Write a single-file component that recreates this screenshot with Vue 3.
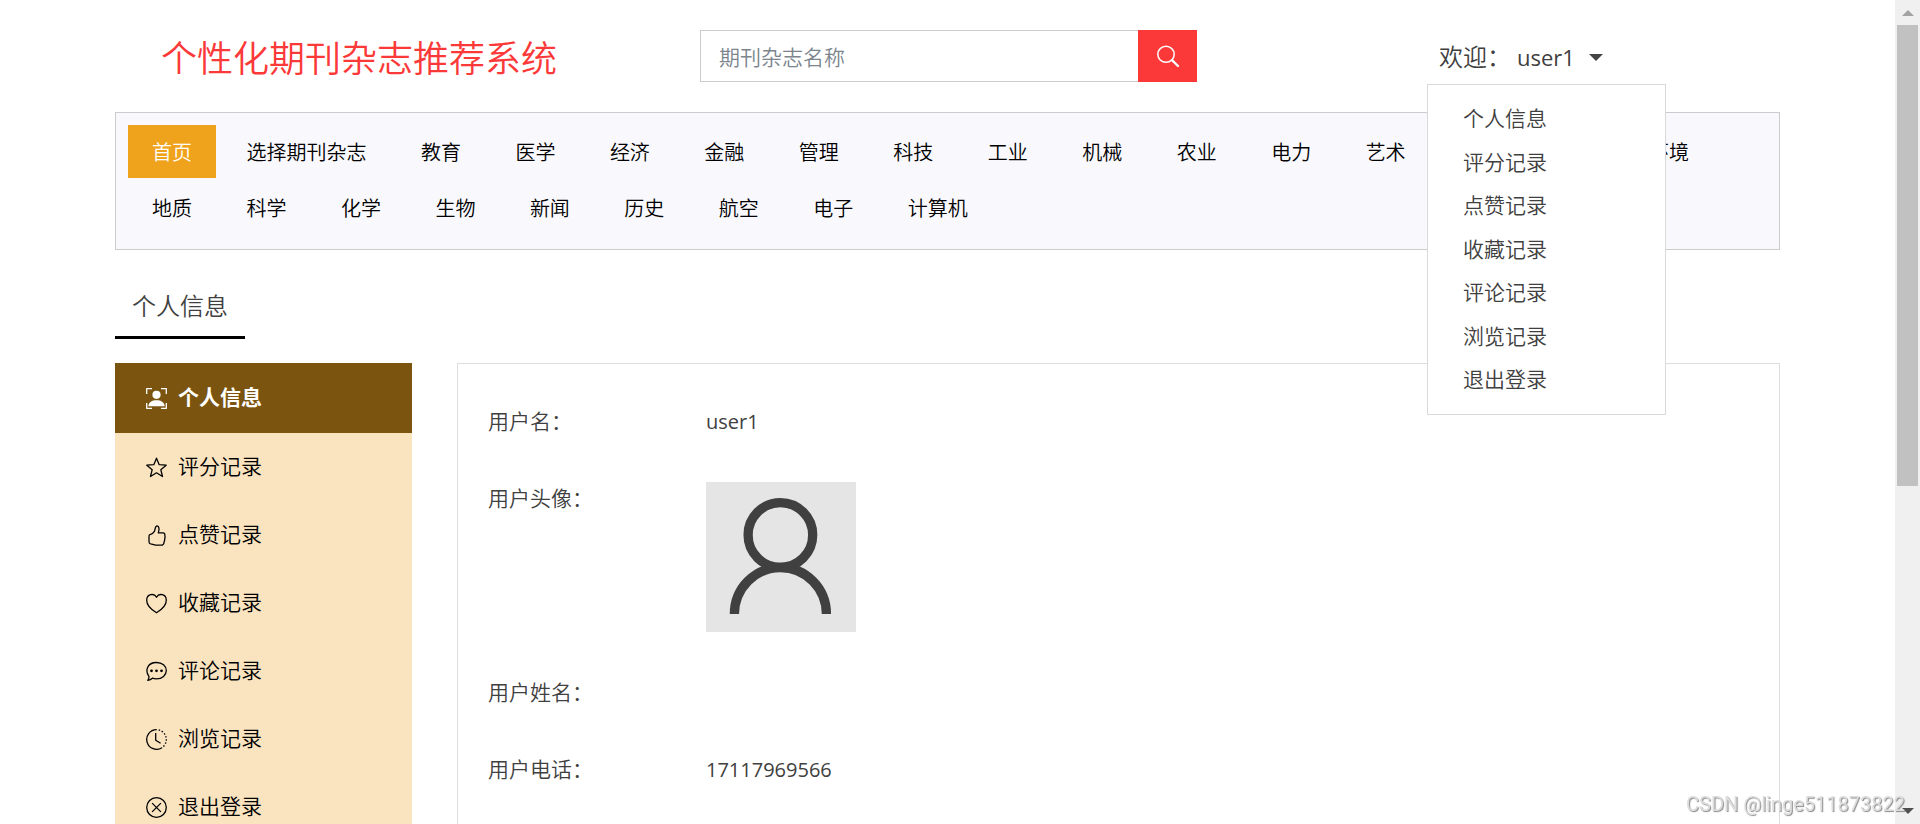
<script setup>
import { ref } from 'vue'

const keyword = ref('')
const menuOpen = ref(true)

const categories = [
  '首页', '选择期刊杂志', '教育', '医学', '经济', '金融', '管理', '科技', '工业',
  '机械', '农业', '电力', '艺术', '文学', '法律', '环境', '地质', '科学', '化学',
  '生物', '新闻', '历史', '航空', '电子', '计算机'
]

const records = [
  { name: '个人信息', icon: 'person' },
  { name: '评分记录', icon: 'star' },
  { name: '点赞记录', icon: 'thumb' },
  { name: '收藏记录', icon: 'heart' },
  { name: '评论记录', icon: 'chat' },
  { name: '浏览记录', icon: 'clock' },
  { name: '退出登录', icon: 'exit' }
]
</script>

<template>
  <div class="page">
    <header class="top">
      <h1 class="brand">个性化期刊杂志推荐系统</h1>
      <form class="search" role="search" @submit.prevent>
        <input v-model="keyword" class="search-input" type="text" placeholder="期刊杂志名称" aria-label="期刊杂志名称">
        <button class="search-button" type="submit" aria-label="搜索">
          <svg width="24" height="24" viewBox="0 0 24 24" fill="none" stroke="#fff">
            <ellipse cx="10" cy="10.3" rx="8.2" ry="8" stroke-width="1.5" />
            <path d="M16 16.2 L22 22" stroke-width="2.4" stroke-linecap="round" />
          </svg>
        </button>
      </form>
      <div class="account">
        <button class="account-toggle" type="button" :aria-expanded="menuOpen" @click="menuOpen = !menuOpen">
          <span class="welcome">欢迎：</span>
          <span class="user">user1</span>
          <span class="caret"></span>
        </button>
        <ul v-if="menuOpen" class="menu">
          <li v-for="r in records" :key="r.name"><a href="#">{{ r.name }}</a></li>
        </ul>
      </div>
    </header>

    <nav class="categories">
      <template v-for="(c, i) in categories" :key="c">
        <a href="#" :class="['category', { active: i === 0 }]">{{ c }}</a>{{ ' ' }}
      </template>
    </nav>

    <h2 class="section-title">个人信息</h2>

    <main class="content">
      <aside class="sidebar">
        <a v-for="(r, i) in records" :key="r.name" href="#" :class="['side-link', { active: i === 0 }]">
          <svg class="side-icon" width="21" height="21" viewBox="0 0 21 21" fill="none" stroke="currentColor" stroke-width="1.3" stroke-linejoin="round">
            <g v-if="r.icon === 'person'">
              <path d="M.7 6V.7H6M15 .7h5.3V6M20.3 15v5.3H15M6 20.3H.7V15" />
              <circle cx="10.5" cy="6.8" r="4.1" fill="currentColor" stroke="none" />
              <path d="M2.300 18.300c.5-4.200 3.700-6 8.200-6s7.700 1.800 8.200 6z" fill="currentColor" stroke="none" />
            </g>
            <path v-else-if="r.icon === 'star'" d="M10.500 1.200l2.700 6.500 7 .5-5.400 4.500 1.700 6.800-6-3.700-6 3.700 1.700-6.800L.8 8.200l7-.5z" />
            <path v-else-if="r.icon === 'thumb'" d="M3.500 9.800c2.400-.3 3.900-1.700 4.900-3.400C9.300 4.700 9 .9 11 .9c2.400.2 2.400 3.400 1.300 7h4.800c1.500.1 2.100 1.400 1.700 2.600.5 1.200.3 2.400-.1 3.200.1 1.200-.1 2.300-.6 3 0 2.500-1.200 3.500-3.300 3.500h-3.500c-2.300 0-4.100-1-6.800-1.400-1.300-.3-1.500-1.200-1.500-2.300V12c0-1.200.1-1.900.5-2.200z" />
            <path v-else-if="r.icon === 'heart'" d="M10.500 19.800C5.500 16.700.7 12.600.7 7.200c0-6 7.200-7.600 9.800-3 2.600-4.600 9.800-3 9.800 3 0 5.400-4.800 9.500-9.800 12.600z" />
            <g v-else-if="r.icon === 'chat'">
              <path d="M2.900 15.300C-1 10 .8 1.600 10.500 1.500c5.800 0 9.800 3.600 9.800 8.100s-4 8.300-9.800 8.300c-1.600 0-2.900-.2-4.100-.7-1.300 1.400-2.900 2-4.600 2.200.8-1.200 1.300-2.600 1.100-4.100z" />
              <g fill="currentColor" stroke="none">
                <circle cx="5.500" cy="9.800" r="1.400" />
                <circle cx="10.500" cy="9.800" r="1.400" />
                <circle cx="15.500" cy="9.800" r="1.400" />
              </g>
            </g>
            <g v-else-if="r.icon === 'clock'">
              <path d="M10.500.7a9.800 9.800 0 1 0 5.400 18" />
              <path d="M10.500.7a9.800 9.800 0 0 1 5.400 18" stroke-dasharray="1.500 1.700" stroke-dashoffset="1" />
              <path d="M9.700 4v7.300l4.900 3" />
            </g>
            <g v-else>
              <circle cx="10.500" cy="10.500" r="9.800" />
              <path d="M6.100 6.100l8.800 8.800M14.900 6.100l-8.800 8.800" />
            </g>
          </svg>
          <span>{{ r.name }}</span>
        </a>
      </aside>

      <dl class="panel">
        <div class="row">
          <dt>用户名：</dt>
          <dd>user1</dd>
        </div>
        <div class="row">
          <dt>用户头像：</dt>
          <dd>
            <svg class="avatar" width="150" height="150" viewBox="0 0 150 150" role="img" aria-label="用户头像">
              <rect width="150" height="150" fill="#e5e5e5" />
              <g fill="none" stroke="#404040" stroke-width="9.300">
                <circle cx="74.400" cy="53" r="32.300" />
                <path d="M28.400 132a46 46.500 0 0 1 92 0" />
              </g>
            </svg>
          </dd>
        </div>
        <div class="row">
          <dt>用户姓名：</dt>
          <dd></dd>
        </div>
        <div class="row">
          <dt>用户电话：</dt>
          <dd>17117969566</dd>
        </div>
      </dl>
    </main>

    <div class="scrollbar" aria-hidden="true">
      <svg width="12" height="6" viewBox="0 0 12 6"><path d="M0 6L6 0l6 6z" fill="#a3a3a3" /></svg>
      <div class="track"><div class="thumb"></div></div>
      <svg width="12" height="6" viewBox="0 0 12 6"><path d="M0 0h12L6 6z" fill="#505050" /></svg>
    </div>
    <div class="watermark">CSDN @linge511873822</div>
  </div>
</template>

<style>
html,
body {
  margin: 0;
  overflow: hidden;
  background: #fff;
}
</style>

<style scoped>
.page {
  box-sizing: border-box;
  height: 100vh;
  overflow: hidden;
  padding: 0 140px 0 115px;
  font-family: "Open Sans", "Noto Sans CJK SC", sans-serif;
  font-size: 21px;
  font-weight: 350;
  line-height: 1.5;
  color: #404040;
}

a {
  color: inherit;
  text-decoration: none;
}

.top {
  display: grid;
  grid-template-columns: 585fr 727fr 353fr;
  align-items: center;
  height: 112px;
}

.brand {
  margin: 0;
  padding: 6px 0 0 46px;
  font-size: 36px;
  font-weight: 350;
  color: #fc3939;
}

.search {
  display: flex;
  width: 497px;
  height: 52px;
}

.search-input {
  flex: 1;
  min-width: 0;
  box-sizing: border-box;
  padding: 3px 18px 0;
  border: 1px solid #ccc;
  border-right: 0;
  font: inherit;
  color: #444;
  outline: 0;
}

.search-input::placeholder {
  color: #7c858d;
  opacity: 1;
}

.search-button {
  display: flex;
  align-items: center;
  justify-content: center;
  width: 59px;
  padding: 0;
  border: 0;
  background: #fc3939;
}

.account {
  position: relative;
}

.account-toggle {
  display: flex;
  align-items: center;
  padding: 2px 12px 0;
  border: 0;
  background: none;
  font: inherit;
  color: #404040;
}

.welcome {
  margin-right: 6px;
  font-size: 24px;
}

.user {
  font-size: 22px;
  font-weight: 400;
}

.caret {
  margin-left: 14px;
  border: 7px solid transparent;
  border-top-color: #444;
  border-bottom: 0;
}

.menu {
  position: absolute;
  z-index: 2;
  top: 47px;
  left: 0;
  box-sizing: border-box;
  width: 239px;
  margin: 0;
  padding: 12px 0;
  border: 1px solid #d9d9d9;
  background: #fff;
  list-style: none;
}

.menu a {
  display: block;
  padding: 6px 35px;
}

.categories {
  padding: 12px 11px;
  border: 1px solid #ccc;
  background: #f9f8fd;
  font-family: "Noto Sans CJK SC", sans-serif;
  font-size: 20px;
  line-height: 53px;
  color: #000;
}

.category {
  display: inline-block;
  margin: 0 1px 3px;
  padding: 0 24px;
  vertical-align: top;
}

.category.active {
  background: #efa31d;
  color: #fff;
}

.section-title {
  width: max-content;
  margin: 32px 0 24px;
  padding: 0 17px 6px;
  border-bottom: 3px solid #000;
  font-size: 24px;
  font-weight: 350;
  line-height: 48px;
}

.content {
  display: flex;
  gap: 45px;
}

.sidebar {
  width: 297px;
  background: #fae4c0;
  color: #000;
}

.side-link {
  display: flex;
  align-items: center;
  gap: 11px;
  height: 68px;
  padding-left: 31px;
}

.side-link.active {
  height: 70px;
  background: #7b550f;
  font-weight: 700;
  color: #fff;
}

.panel {
  display: flex;
  flex: 1;
  flex-direction: column;
  gap: 44px;
  margin: 0;
  padding: 41px 30px;
  border: 1px solid #ddd;
}

.row {
  display: grid;
  grid-template-columns: 218px 1fr;
  line-height: 33px;
}

.row dd {
  margin: 0;
  font-size: 20px;
  font-weight: 400;
}

.avatar {
  display: block;
}

.scrollbar {
  position: fixed;
  top: 0;
  right: 0;
  bottom: 0;
  box-sizing: border-box;
  display: flex;
  flex-direction: column;
  align-items: center;
  gap: 9px;
  width: 25px;
  padding: 10px 0;
  background: #f0f0f0;
}

.track {
  flex: 1;
  width: 21px;
}

.thumb {
  height: 59.5%;
  background: #c1c1c1;
}

.watermark {
  position: fixed;
  right: 15px;
  bottom: 5px;
  font-family: Roboto, sans-serif;
  font-size: 20px;
  font-weight: 400;
  color: #ddd;
  text-shadow: 1px 1px 1px #888;
}
</style>
